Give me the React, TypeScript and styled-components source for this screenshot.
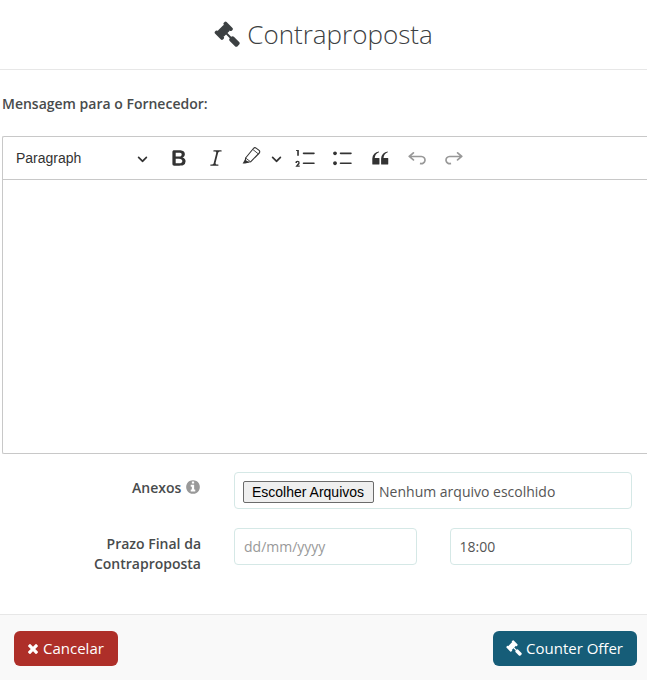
import React, { useRef, useState } from "react";
import styled, { createGlobalStyle } from "styled-components";

const GlobalStyle = createGlobalStyle`
  * { box-sizing: border-box; }
  body {
    margin: 0;
    background: #fff;
    color: #484b4c;
    font-family: "Open Sans", "Noto Sans", sans-serif;
    font-size: 14px;
    line-height: 20px;
  }
`;

const Dialog = styled.form`
  display: flex;
  flex-direction: column;
  min-height: 100vh;
`;

const Header = styled.header`
  display: flex;
  align-items: center;
  justify-content: center;
  gap: 7px;
  height: 70px;
  padding-bottom: 2px;
  border-bottom: 1px solid #e7e7e7;
  color: #3c4042;
`;

const Title = styled.h1`
  margin: 0;
  font-size: 26px;
  line-height: 36px;
  font-weight: 300;
`;

const Body = styled.main`
  flex: 1;
  padding: 24px 0 40px;
`;

const MessageLabel = styled.h2`
  margin: 0 2px 22px;
  font-size: 14px;
  line-height: 20px;
  font-weight: 600;
`;

const Editor = styled.section`
  margin-left: 2px;
  border: 1px solid #c8c8c8;
  border-right: 0;
  border-radius: 2px 0 0 2px;
`;

const Toolbar = styled.div`
  display: flex;
  align-items: center;
  gap: 5px;
  height: 43px;
  padding-left: 5px;
  border-bottom: 1px solid #c8c8c8;
  color: #333;
`;

const ToolButton = styled.button<{ $narrow?: boolean }>`
  display: flex;
  align-items: center;
  justify-content: center;
  flex: none;
  width: ${(p) => (p.$narrow ? "14px" : "32px")};
  height: 32px;
  padding: 0;
  border: 0;
  border-radius: 2px;
  background: none;
  color: inherit;
  &:disabled { opacity: 0.5; }
`;

const HeadingButton = styled.button`
  display: flex;
  align-items: center;
  justify-content: space-between;
  flex: none;
  width: 147px;
  height: 32px;
  margin-right: 3px;
  padding: 0 7px 0 8px;
  border: 0;
  background: none;
  color: inherit;
  font: 14px/20px "Liberation Sans", Arial, sans-serif;
`;

const SplitButton = styled.div`
  display: flex;
  margin-right: 2px;
`;

const TextArea = styled.textarea`
  display: block;
  width: 100%;
  height: 273px;
  padding: 12px 8px;
  border: 0;
  outline: 0;
  resize: none;
  background: none;
  color: inherit;
  font: inherit;
`;

const Fields = styled.div`
  display: grid;
  gap: 19px;
  padding: 18px 15px 0 2px;
`;

const Field = styled.div`
  display: grid;
  grid-template-columns: minmax(0, 1fr) minmax(0, 2fr);
  column-gap: 33px;
`;

const FieldLabel = styled.label`
  padding-top: 6px;
  font-weight: 600;
  text-align: right;
`;

const InfoMark = styled.span`
  color: #999;
`;

const Inputs = styled.div`
  display: grid;
  grid-template-columns: repeat(2, minmax(0, 1fr));
  align-items: start;
  gap: 33px;
`;

const TextInput = styled.input`
  width: 100%;
  height: 37px;
  padding: 0 9px;
  border: 1px solid #d5e8e6;
  border-radius: 4px;
  background: #fff;
  color: #555;
  font: inherit;
  &::placeholder { color: #999; opacity: 1; }
`;

const FileBox = styled.div`
  display: flex;
  align-items: center;
  gap: 5px;
  height: 37px;
  padding: 2px 8px 0;
  border: 1px solid #d5e8e6;
  border-radius: 4px;
  color: #555;
`;

const FileButton = styled.button`
  height: 22px;
  padding: 0 9px 0 8px;
  border: 1px solid #6b6b6b;
  border-radius: 2px;
  background: #efefef;
  color: #000;
  font: 14px/20px "Liberation Sans", Arial, sans-serif;
`;

const Footer = styled.footer`
  display: flex;
  justify-content: space-between;
  padding: 16px 10px 14px 14px;
  border-top: 1px solid #e7e7e7;
  background: #f9f9f9;
`;

const ActionButton = styled.button<{ $color: string }>`
  display: flex;
  align-items: center;
  gap: 4px;
  height: 35px;
  padding: 0 14px 1px 13px;
  border: 0;
  border-radius: 6px;
  background: ${(p) => p.$color};
  color: #fff;
  font: 500 15px/20px "Open Sans", "Noto Sans", sans-serif;
`;

const InlineSvg = styled.svg`
  vertical-align: -2px;
`;

const gavel =
  "M1771 1536q0 53-37 90l-107 108q-39 37-91 37-53 0-90-37l-363-364q-38-36-38-90 0-53 43-96l-256-256-126 126q-14 14-34 14t-34-14q2 2 12.5 12t12.5 13 10 11.5 10 13.5 6 13.5 5.5 16.5 1.5 18q0 38-28 68-3 3-16.5 18t-19 20.5-18.5 16.5-22 15.5-22 9-26 4.5q-40 0-68-28l-408-408q-28-28-28-68 0-13 4.5-26t9-22 15.5-22 16.5-18.5 20.5-19 18-16.5q30-28 68-28 10 0 18 1.5t16.5 5.5 13.5 6 13.5 10 11.5 10 13 12.5 12 12.5q-14-14-14-34t14-34l348-348q14-14 34-14t34 14q-2-2-12.5-12t-12.5-13-10-11.5-10-13.5-6-13.5-5.5-16.5-1.5-18q0-38 28-68 3-3 16.5-18t19-20.5 18.5-16.5 22-15.5 22-9 26-4.5q40 0 68 28l408 408q28 28 28 68 0 13-4.5 26t-9 22-15.5 22-16.5 18.5-20.5 19-18 16.5q-30 28-68 28-10 0-18-1.5t-16.5-5.5-13.5-6-13.5-10-11.5-10-13-12.5-12-12.5q14 14 14 34t-14 34l-126 126 256 256q43-43 96-43 52 0 91 37l363 363q37 39 37 91z";
const times =
  "M1490 1322q0 40-28 68l-136 136q-28 28-68 28t-68-28l-294-294-294 294q-28 28-68 28t-68-28l-136-136q-28-28-28-68t28-68l294-294-294-294q-28-28-28-68t28-68l136-136q28-28 68-28t68 28l294 294 294-294q28-28 68-28t68 28l136 136q28 28 28 68t-28 68l-294 294 294 294q28 28 28 68z";
const info =
  "M1152 1376v-160q0-14-9-23t-23-9h-96v-512q0-14-9-23t-23-9h-320q-14 0-23 9t-9 23v160q0 14 9 23t23 9h96v320h-96q-14 0-23 9t-9 23v160q0 14 9 23t23 9h448q14 0 23-9t9-23zm-128-896v-160q0-14-9-23t-23-9h-192q-14 0-23 9t-9 23v160q0 14 9 23t23 9h192q14 0 23-9t9-23zm640 416q0 209-103 385.5t-279.5 279.5-385.5 103-385.5-103-279.5-279.5-103-385.5 103-385.5 279.5-279.5 385.5-103 385.5 103 279.5 279.5 103 385.5z";

const bold =
  "M10.187 17H5.773c-.637 0-1.092-.138-1.364-.415-.273-.277-.409-.718-.409-1.323V4.738c0-.617.14-1.062.419-1.332.279-.27.73-.406 1.354-.406h4.68c.69 0 1.288.041 1.793.124.506.083.96.242 1.36.478.341.197.644.447.906.75a3.262 3.262 0 0 1 .808 2.162c0 1.401-.722 2.426-2.167 3.075C15.05 10.175 16 11.315 16 13.01a3.756 3.756 0 0 1-2.296 3.504 6.1 6.1 0 0 1-1.517.377c-.571.073-1.238.11-2 .11zm-.217-6.217H7v4.087h3.069c1.977 0 2.965-.69 2.965-2.072 0-.707-.256-1.22-.768-1.537-.512-.319-1.277-.478-2.296-.478zM7 5.13v3.619h2.606c.729 0 1.292-.067 1.69-.2a1.6 1.6 0 0 0 .91-.765c.165-.267.247-.566.247-.897 0-.707-.26-1.176-.778-1.409-.519-.232-1.31-.348-2.375-.348H7z";
const italic =
  "m9.586 14.633.021.004c-.036.335.095.655.393.962.082.083.173.15.274.201h1.474a.6.6 0 1 1 0 1.2H5.304a.6.6 0 0 1 0-1.2h1.15c.474-.07.809-.182 1.005-.334.157-.122.291-.32.404-.597l2.416-9.55a1.053 1.053 0 0 0-.281-.823 1.12 1.12 0 0 0-.442-.296H8.15a.6.6 0 0 1 0-1.2h6.443a.6.6 0 1 1 0 1.2h-1.195c-.376.056-.65.155-.823.296-.215.175-.423.439-.623.79l-2.366 9.347z";
const numbered =
  "M7 5.75c0 .414.336.75.75.75h9.5a.75.75 0 1 0 0-1.5h-9.5a.75.75 0 0 0-.75.75zM3.5 3v5H2V3.7H1v-1h2.5V3zM.343 17.857l2.59-3.257H2.92a.6.6 0 1 0-1.04 0H.302a2 2 0 1 1 3.995 0h-.001c-.048.405-.16.734-.333.988-.175.254-.59.692-1.244 1.312H4.3v1h-4l.043-.043zM7 14.75a.75.75 0 0 1 .75-.75h9.5a.75.75 0 1 1 0 1.5h-9.5a.75.75 0 0 1-.75-.75z";
const bulleted =
  "M7 5.75c0 .414.336.75.75.75h9.5a.75.75 0 1 0 0-1.5h-9.5a.75.75 0 0 0-.75.75zm-6 0C1 4.784 1.777 4 2.75 4c.966 0 1.75.777 1.75 1.75 0 .966-.777 1.75-1.75 1.75C1.784 7.5 1 6.723 1 5.75zm6 9c0 .414.336.75.75.75h9.5a.75.75 0 1 0 0-1.5h-9.5a.75.75 0 0 0-.75.75zm-6 0c0-.966.777-1.75 1.75-1.75.966 0 1.75.777 1.75 1.75 0 .966-.777 1.75-1.75 1.75-.966 0-1.75-.777-1.75-1.75z";
const quote =
  "M3 10.423a6.5 6.5 0 0 1 6.056-6.408l.038.67C6.448 5.423 5.354 7.663 5.22 10H9c.552 0 .5.432.5.986v4.511c0 .554-.448.503-1 .503h-5c-.552 0-.5-.449-.5-1.003v-4.574zm8 0a6.5 6.5 0 0 1 6.056-6.408l.038.67c-2.646.739-3.74 2.979-3.873 5.315H17c.552 0 .5.432.5.986v4.511c0 .554-.448.503-1 .503h-5c-.552 0-.5-.449-.5-1.003v-4.574z";
const undo =
  "m5.042 9.367 2.189 1.837a.75.75 0 0 1-.965 1.149l-3.788-3.18a.747.747 0 0 1-.21-.284.75.75 0 0 1 .17-.945L6.23 4.762a.75.75 0 1 1 .964 1.15L4.863 7.866h8.917A.75.75 0 0 1 14 7.9a4 4 0 1 1-1.477 7.718l.344-1.489a2.5 2.5 0 1 0 1.094-4.73l.008-.032H5.042z";

function Glyph({ d, size }: { d: string; size: number }) {
  return (
    <InlineSvg width={size} height={size} viewBox="0 0 1792 1792" fill="currentColor" aria-hidden="true">
      <path d={d} />
    </InlineSvg>
  );
}

function TimesIcon() {
  return (
    <svg width="12" height="15" viewBox="192 0 1408 1792" fill="currentColor" aria-hidden="true">
      <path d={times} />
    </svg>
  );
}

function ToolIcon({ d, mirrored }: { d: string; mirrored?: boolean }) {
  return (
    <svg width="22" height="22" viewBox="0 0 20 20" fill="currentColor" aria-hidden="true">
      <path d={d} transform={mirrored ? "translate(20 0) scale(-1 1)" : undefined} />
    </svg>
  );
}

function Chevron() {
  return (
    <svg width="11" height="11" viewBox="0 0 10 10" fill="currentColor" aria-hidden="true">
      <path d="M.941 4.523a.75.75 0 1 1 1.06-1.06l3.006 3.005 3.005-3.005a.75.75 0 1 1 1.06 1.06l-3.549 3.55a.75.75 0 0 1-1.168-.136L.941 4.523z" />
    </svg>
  );
}

function MarkerIcon() {
  return (
    <svg width="22" height="22" viewBox="0 0 22 22" fill="none" stroke="currentColor" aria-hidden="true">
      <path d="M3.6 11 11.4 1.5q1.3-1.4 2.7-.4l3 2.3q1.2 1.1.2 2.6L8.6 14.8 3.2 15.4z" strokeWidth="1.1" strokeLinejoin="round" />
      <path d="m3.6 11 5 3.8M11 2.6l5.2 4.2" strokeWidth="0.9" />
      <path d="m3 12.4 4.2 3.2-4 .9H0.6z" fill="currentColor" stroke="none" />
    </svg>
  );
}

export default function App() {
  const fileInput = useRef<HTMLInputElement>(null);
  const [fileText, setFileText] = useState("Nenhum arquivo escolhido");

  return (
    <>
      <GlobalStyle />
      <Dialog onSubmit={(e) => e.preventDefault()}>
        <Header>
          <Glyph d={gavel} size={26} />
          <Title>Contraproposta</Title>
        </Header>
        <Body>
          <MessageLabel id="message-label">Mensagem para o Fornecedor:</MessageLabel>
          <Editor>
            <Toolbar role="toolbar">
              <HeadingButton type="button">
                Paragraph
                <Chevron />
              </HeadingButton>
              <ToolButton type="button" aria-label="Negrito"><ToolIcon d={bold} /></ToolButton>
              <ToolButton type="button" aria-label="Itálico"><ToolIcon d={italic} /></ToolButton>
              <SplitButton>
                <ToolButton type="button" aria-label="Realce"><MarkerIcon /></ToolButton>
                <ToolButton type="button" $narrow aria-label="Opções de realce"><Chevron /></ToolButton>
              </SplitButton>
              <ToolButton type="button" aria-label="Lista numerada"><ToolIcon d={numbered} /></ToolButton>
              <ToolButton type="button" aria-label="Lista com marcadores"><ToolIcon d={bulleted} /></ToolButton>
              <ToolButton type="button" aria-label="Citação"><ToolIcon d={quote} /></ToolButton>
              <ToolButton type="button" aria-label="Desfazer" disabled><ToolIcon d={undo} /></ToolButton>
              <ToolButton type="button" aria-label="Refazer" disabled><ToolIcon d={undo} mirrored /></ToolButton>
            </Toolbar>
            <TextArea aria-labelledby="message-label" />
          </Editor>
          <Fields>
            <Field>
              <FieldLabel htmlFor="attachments">
                Anexos <InfoMark><Glyph d={info} size={16} /></InfoMark>
              </FieldLabel>
              <FileBox>
                <input
                  ref={fileInput}
                  id="attachments"
                  type="file"
                  multiple
                  hidden
                  onChange={(e) =>
                    setFileText(
                      Array.from(e.target.files ?? []).map((f) => f.name).join(", ") || "Nenhum arquivo escolhido"
                    )
                  }
                />
                <FileButton type="button" onClick={() => fileInput.current?.click()}>Escolher Arquivos</FileButton>
                <span>{fileText}</span>
              </FileBox>
            </Field>
            <Field>
              <FieldLabel htmlFor="deadline">Prazo Final da Contraproposta</FieldLabel>
              <Inputs>
                <TextInput id="deadline" placeholder="dd/mm/yyyy" />
                <TextInput aria-label="Hora" defaultValue="18:00" />
              </Inputs>
            </Field>
          </Fields>
        </Body>
        <Footer>
          <ActionButton type="button" $color="#ae2f29">
            <TimesIcon />
            Cancelar
          </ActionButton>
          <ActionButton type="submit" $color="#165d78">
            <Glyph d={gavel} size={16} />
            Counter Offer
          </ActionButton>
        </Footer>
      </Dialog>
    </>
  );
}
